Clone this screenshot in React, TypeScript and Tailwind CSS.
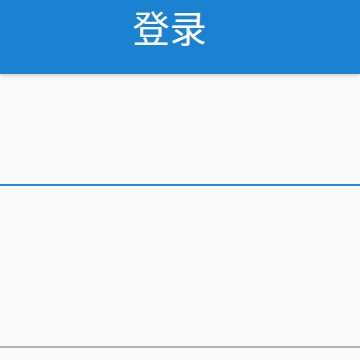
import React from 'react';

export default function App() {
  return (
    <div className="w-[360px] h-[360px] overflow-hidden bg-[#fafafa]" style={{ fontFamily: '"Noto Sans CJK SC", "Noto Sans", sans-serif' }}>
      <header className="h-[74px] bg-[#1b82d2] flex items-start justify-center pt-[9px] pr-[21px] shadow-[0_2px_3px_rgba(0,0,0,0.15)] relative">
        <h1 className="text-white text-[37px] leading-none font-normal">登录</h1>
      </header>
      <div>
        <input
          className="block w-full h-[112px] bg-transparent border-b-2 border-[#2c88d9] outline-none"
          aria-label="用户名"
        />
        <input
          type="password"
          className="block w-full h-[162px] bg-transparent border-b-2 border-[#b3b3b3] outline-none"
          aria-label="密码"
        />
      </div>
    </div>
  );
}
